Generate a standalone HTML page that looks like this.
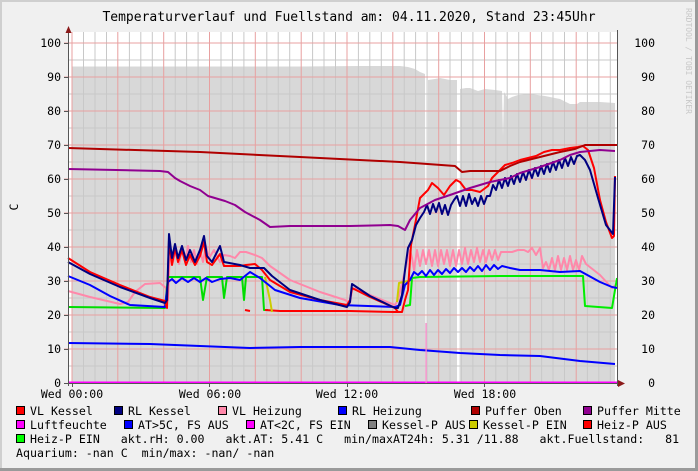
<!DOCTYPE html>
<html><head><meta charset="utf-8"><style>
html,body{margin:0;padding:0;background:#f0f0f0}
svg{display:block}
text{font-family:"DejaVu Sans Mono","Liberation Mono",monospace;fill:#000}
</style></head><body>
<svg width="698" height="471" viewBox="0 0 698 471" xmlns="http://www.w3.org/2000/svg">
<rect x="0" y="0" width="698" height="471" fill="#f0f0f0"/>
<rect x="0" y="0" width="698" height="2" fill="#cfcfcf"/>
<rect x="0" y="0" width="2" height="471" fill="#cfcfcf"/>
<rect x="695" y="0" width="3" height="471" fill="#9a9a9a"/>
<rect x="0" y="468" width="698" height="3" fill="#9a9a9a"/>
<rect x="68" y="32" width="549" height="351" fill="#ffffff"/>
<path d="M72,383 L72,66.5 L300,66.5 L360,66 L400,66 L408,67 L415,69 L420,72 L425,74 L425.5,383 Z M427.5,383 L428,80 L435,79 L440,78 L450,80 L457,80 L457,383 Z M459.5,383 L460,89 L466,88 L470,88 L478,91 L485,89 L495,90 L502,91 L503,136 L504,92 L508,99 L512,97 L518,95 L530,94 L545,96 L560,99 L570,104 L577,104 L580,102 L600,102 L615,103 L615,383 Z" fill="#d8d8d8"/>
<g stroke="#c8c8c8" stroke-width="1">
<path d="M83.5,32V383M95,32V383M106.5,32V383M129.4,32V383M140.8,32V383M152.3,32V383M175.2,32V383M186.6,32V383M198.1,32V383M221,32V383M232.4,32V383M243.9,32V383M266.8,32V383M278.2,32V383M289.7,32V383M312.6,32V383M324,32V383M335.5,32V383M358.4,32V383M369.8,32V383M381.3,32V383M404.2,32V383M415.6,32V383M427.1,32V383M450,32V383M461.4,32V383M472.9,32V383M495.8,32V383M507.2,32V383M518.7,32V383M541.6,32V383M553,32V383M564.5,32V383M587.4,32V383M598.8,32V383M610.3,32V383"/>
<path d="M68,366H617M68,332H617M68,298H617M68,264H617M68,230H617M68,196H617M68,162H617M68,128H617M68,94H617M68,60H617"/>
</g>
<g stroke="#e8a0a0" stroke-width="1">
<path d="M72,32V383M117.8,32V383M163.7,32V383M209.5,32V383M255.3,32V383M301.2,32V383M347,32V383M392.8,32V383M438.7,32V383M484.5,32V383M530.3,32V383M576.2,32V383"/>
<path d="M64,349H617M64,315H617M64,281H617M64,247H617M64,213H617M64,179H617M64,145H617M64,111H617M64,77H617M64,43H617"/>
</g>
<g fill="none" stroke-width="2" stroke-linejoin="round">
<polyline stroke="#0000ff" points="68,343 150,344 200,346 250,348 300,347 390,347 420,350 460,353 500,355 540,356 580,361 615,364"/>
<polyline stroke="#ff00ff" points="68,382.5 617,382.5"/>
<polyline stroke="#ff88aa" points="68,291 90,297 120,304 128,302 135,292 145,284 160,283 166,288 168,300 170,250 173,262 176,248 179,264 182,250 185,262 188,246 191,262 194,250 197,264 200,250 203,262 206,246 209,258 214,250 220,262 224,255 230,256 235,258 240,252 246,252 255,255 262,258 270,266 290,280 320,292 345,300 350,303 352,290 356,288 370,295 395,305 398,300 410,250 412,258 414,270 417,250 420,266 423,250 426,264 429,250 432,266 435,250 438,266 441,250 444,264 447,250 450,266 453,250 456,266 459,250 462,264 465,248 468,264 471,250 474,262 477,248 480,262 483,250 486,262 489,250 492,260 495,250 498,260 501,252 506,252 512,252 518,250 524,250 528,252 532,248 536,255 540,248 543,268 546,262 549,270 552,258 555,270 558,256 561,270 564,258 567,270 570,256 573,270 576,260 579,270 582,256 586,264 600,275 612,288 617,284"/>
<polyline stroke="#00dd00" points="68,307 165,308 168,277 200,277 203,300 207,277 222,277 224,298 227,277 242,277 244,300 246,277 262,277 264,310 268,310"/>
<polyline stroke="#ff0000" points="245,310 250,311"/>
<polyline stroke="#ff0000" points="265,310 280,311 350,311 395,312 400,312"/>
<polyline stroke="#cccc00" points="397,302 399,283 412,280"/>
<polyline stroke="#cccc00" points="265,277 270,300 272,312"/>
<polyline stroke="#00ee00" points="405,306 410,305 412,278 420,277 500,276 583,276 585,306 612,308 615,290 617,278"/>
<polyline stroke="#0000ff" points="68,276 90,285 110,296 130,305 165,307 168,282 172,279 176,283 182,278 188,282 194,278 200,282 206,278 212,282 220,279 230,278 240,280 250,272 260,278 275,290 300,298 340,305 395,307 400,305 405,285 410,280 414,272 418,275 422,271 426,276 430,270 434,275 438,270 442,274 446,269 450,273 454,268 458,272 462,268 466,272 470,267 474,271 478,266 482,271 486,265 490,270 494,265 498,269 502,266 510,268 520,270 540,270 560,272 580,271 600,282 612,287 617,288"/>
<polyline stroke="#ff0000" points="68,258 90,272 120,285 150,297 165,301 167,308 169,240 172,265 175,248 178,262 182,250 186,265 190,255 195,265 200,256 204,242 207,262 212,265 220,254 224,266 240,266 246,265 255,264 262,270 270,280 290,292 320,300 347,305 350,300 352,288 358,291 370,297 395,308 398,312 402,312 405,300 408,290 411,245 415,225 420,198 428,190 432,183 438,188 444,195 450,186 456,180 460,182 466,190 472,190 480,192 488,186 492,178 500,170 505,165 512,163 520,160 528,158 536,156 544,152 552,150 560,150 570,148 578,147 583,146 588,150 594,168 600,200 606,222 612,238 614,236 615,176"/>
<polyline stroke="#000080" points="68,262 90,274 120,287 150,298 165,303 167,300 169,234 172,258 175,244 178,258 182,246 186,260 190,250 195,262 200,250 204,236 207,256 212,262 220,246 224,262 240,265 250,268 258,268 264,268 272,276 290,290 320,300 347,307 350,302 352,284 358,288 370,296 395,308 398,308 402,295 405,270 408,248 412,240 416,225 420,218 424,212 427,205 430,214 433,204 436,212 439,203 442,214 445,205 448,215 451,205 454,200 457,196 460,206 463,196 466,206 469,194 472,204 475,198 478,206 481,196 484,204 487,196 490,196 493,185 496,190 499,180 502,188 505,178 508,186 511,176 514,184 517,174 520,182 523,172 526,180 529,170 532,178 535,168 538,176 541,166 544,174 547,164 550,172 553,162 556,170 559,160 562,168 565,158 568,166 571,157 574,164 577,156 580,155 585,160 590,170 598,198 606,225 613,234 615,177"/>
<polyline stroke="#b00000" points="68,148 200,152 300,157 400,162 455,166 462,172 470,171 500,171 510,166 520,162 540,157 560,152 575,149 585,145 617,145"/>
<polyline stroke="#900090" points="68,169 160,171 168,172 175,178 180,181 190,186 200,190 208,196 225,201 235,205 245,212 260,220 270,227 290,226 350,226 390,225 398,226 405,230 410,220 420,208 435,200 450,195 470,188 490,182 500,180 510,178 520,173 540,167 560,160 570,155 580,152 600,150 615,151"/>
</g>
<rect x="425.5" y="323" width="1.2" height="60" fill="#ff88cc"/>
<g stroke="#555" stroke-width="1">
<path d="M68.5,30V386M617.5,30V386M64,383.5H622"/>
<path d="M64,43.5H68M64,77.5H68M64,111.5H68M64,145.5H68M64,179.5H68M64,213.5H68M64,247.5H68M64,281.5H68M64,315.5H68M64,349.5H68"/>
<path d="M72.5,383V387M209.5,383V387M347.5,383V387M484.5,383V387"/>
</g>
<path d="M65.5,33 L68.5,26 L71.5,33Z" fill="#8b1a1a"/>
<path d="M618,380 L625,383.5 L618,387Z" fill="#8b1a1a"/>
<g font-size="11.5">
<g text-anchor="end">
<text x="61" y="47">100</text><text x="61" y="81">90</text><text x="61" y="115">80</text><text x="61" y="149">70</text><text x="61" y="183">60</text><text x="61" y="217">50</text><text x="61" y="251">40</text><text x="61" y="285">30</text><text x="61" y="319">20</text><text x="61" y="353">10</text><text x="61" y="387">0</text>
<text x="655" y="47">100</text><text x="655" y="81">90</text><text x="655" y="115">80</text><text x="655" y="149">70</text><text x="655" y="183">60</text><text x="655" y="217">50</text><text x="655" y="251">40</text><text x="655" y="285">30</text><text x="655" y="319">20</text><text x="655" y="353">10</text><text x="655" y="387">0</text>
</g>
<g text-anchor="middle">
<text x="72" y="398">Wed 00:00</text><text x="210" y="398">Wed 06:00</text><text x="347" y="398">Wed 12:00</text><text x="485" y="398">Wed 18:00</text>
</g>
<text transform="translate(18,207) rotate(-90)" text-anchor="middle">C</text>
</g>
<text x="349" y="21" font-size="13" text-anchor="middle">Temperaturverlauf und Fuellstand am: 04.11.2020, Stand 23:45Uhr</text>
<text transform="translate(686,8) rotate(90)" font-size="8" style="fill:#c8c8c8">RRDTOOL / TOBI OETIKER</text>
<g stroke="#000" stroke-width="1">
<rect x="16.5" y="406.5" width="8" height="8" fill="#ff0000"/>
<rect x="114.5" y="406.5" width="8" height="8" fill="#000080"/>
<rect x="218.5" y="406.5" width="8" height="8" fill="#ff88aa"/>
<rect x="338.5" y="406.5" width="8" height="8" fill="#0000ff"/>
<rect x="471.5" y="406.5" width="8" height="8" fill="#b00000"/>
<rect x="583.5" y="406.5" width="8" height="8" fill="#900090"/>
<rect x="16.5" y="420.5" width="8" height="8" fill="#ff00ff"/>
<rect x="124.5" y="420.5" width="8" height="8" fill="#0000ff"/>
<rect x="246.5" y="420.5" width="8" height="8" fill="#ff00ff"/>
<rect x="368.5" y="420.5" width="8" height="8" fill="#808080"/>
<rect x="469.5" y="420.5" width="8" height="8" fill="#cccc00"/>
<rect x="583.5" y="420.5" width="8" height="8" fill="#ff0000"/>
<rect x="16.5" y="434.5" width="8" height="8" fill="#00ff00"/>
</g>
<g font-size="11.6" style="white-space:pre">
<text x="30" y="415">VL Kessel</text>
<text x="128" y="415">RL Kessel</text>
<text x="232" y="415">VL Heizung</text>
<text x="352" y="415">RL Heizung</text>
<text x="485" y="415">Puffer Oben</text>
<text x="597" y="415">Puffer Mitte</text>
<text x="30" y="429">Luftfeuchte</text>
<text x="138" y="429">AT&gt;5C, FS AUS</text>
<text x="260" y="429">AT&lt;2C, FS EIN</text>
<text x="382" y="429">Kessel-P AUS</text>
<text x="483" y="429">Kessel-P EIN</text>
<text x="597" y="429">Heiz-P AUS</text>
<text x="30" y="443" xml:space="preserve">Heiz-P EIN   akt.rH: 0.00   akt.AT: 5.41 C   min/maxAT24h: 5.31 /11.88   akt.Fuellstand:   81</text>
<text x="16" y="457" xml:space="preserve">Aquarium: -nan C  min/max: -nan/ -nan</text>
</g>
</svg>
</body></html>
